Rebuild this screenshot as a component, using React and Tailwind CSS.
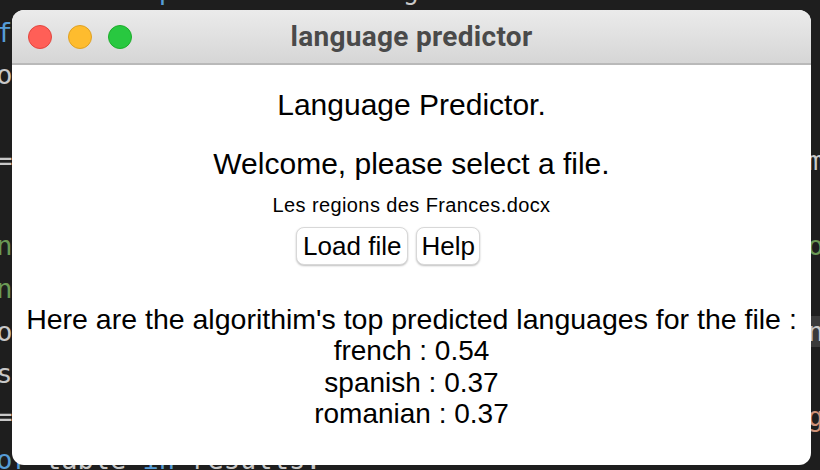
import React from "react";

const mono = "font-['DejaVu_Sans_Mono',monospace] text-[27px] leading-[42.7px] whitespace-pre";

function CodeLine({ left, right }) {
  return (
    <div className="flex justify-between h-[42.7px] w-[860px] ml-[-20px] shrink-0">
      <div>{left}</div>
      <div>{right}</div>
    </div>
  );
}

export default function App() {
  const gray = "text-[#c8c8c8]";
  const blue = "text-[#569cd6]";
  const green = "text-[#6a9955]";
  const orange = "text-[#ce9178]";
  return (
    <div className="relative w-[820px] h-[470px] overflow-hidden bg-[#1e1e1e]">
      {/* code editor behind the window */}
      <div className={`flex flex-col mt-[-31px] ${mono}`}>
        <CodeLine
          left={<span><span>{"           "}</span><span className={blue}>p</span><span>{"              "}</span><span className={gray}>g</span></span>}
          right={null}
        />
        <CodeLine left={<span className={blue}>if</span>} right={null} />
        <CodeLine left={<span className={gray}>so</span>} right={null} />
        <CodeLine left={null} right={null} />
        <CodeLine left={<span className={gray}> =</span>} right={<span className={gray}>m </span>} />
        <CodeLine left={null} right={null} />
        <CodeLine left={<span className={green}>in</span>} right={<span className={green}>o </span>} />
        <CodeLine left={<span className={green}>un</span>} right={null} />
        <CodeLine left={<span className={gray}>to</span>} right={<span className={`${gray} bg-[#3a3a3a]`}>n </span>} />
        <CodeLine left={<span className={gray}>es</span>} right={null} />
        <CodeLine left={<span className={gray}> =</span>} right={<span className={orange}>g </span>} />
        <CodeLine
          left={<span><span className={blue}>for</span><span className={gray}> table </span><span className={blue}>in</span><span className={gray}> results:</span></span>}
          right={null}
        />
      </div>

      {/* window */}
      <div className="absolute left-[12px] top-[10px] w-[799px] h-[455px] rounded-[12px] overflow-hidden bg-white flex flex-col">
        <div className="h-[55px] shrink-0 grid grid-cols-[1fr_auto_1fr] items-center bg-gradient-to-b from-[#ebebeb] to-[#d6d6d6] border-b-2 border-[#b9b9b9]">
          <div className="flex items-center gap-[16px] pl-[16px]">
            <span className="w-[24px] h-[24px] rounded-full bg-[#ff5f57] border border-[#e2463f]" />
            <span className="w-[24px] h-[24px] rounded-full bg-[#febc2e] border border-[#dfa123]" />
            <span className="w-[24px] h-[24px] rounded-full bg-[#28c840] border border-[#1dad2b]" />
          </div>
          <div className="font-['Roboto',sans-serif] font-bold text-[28px] leading-[32px] tracking-[0.3px] text-[#4a4a4a]">
            language predictor
          </div>
          <div />
        </div>
        <div className="flex flex-col items-center font-['Liberation_Sans',Arial,sans-serif] text-black">
          <div className="mt-[23px] text-[30px] leading-[34px]">Language Predictor.</div>
          <div className="mt-[25px] text-[30px] leading-[34px]">Welcome, please select a file.</div>
          <div className="mt-[13px] text-[20px] leading-[22px] tracking-[0.4px]">Les regions des Frances.docx</div>
          <div className="mt-[11px] mr-[47px] flex gap-[8px]">
            <button className="h-[38px] px-[6px] rounded-[8px] bg-white border border-[#d8d8d8] shadow-[0_1px_2px_rgba(0,0,0,0.25)] text-[26px] leading-[30px]">
              Load file
            </button>
            <button className="h-[38px] px-[4px] rounded-[8px] bg-white border border-[#d8d8d8] shadow-[0_1px_2px_rgba(0,0,0,0.25)] text-[26px] leading-[30px]">
              Help
            </button>
          </div>
          <div className="mt-[38px] text-[28.5px] leading-[32px] whitespace-nowrap">
            Here are the algorithim's top predicted languages for the file :
          </div>
          <div className="text-[28px] leading-[31.5px]">french : 0.54</div>
          <div className="text-[28px] leading-[31.5px]">spanish : 0.37</div>
          <div className="text-[28px] leading-[31.5px]">romanian : 0.37</div>
        </div>
      </div>
    </div>
  );
}
